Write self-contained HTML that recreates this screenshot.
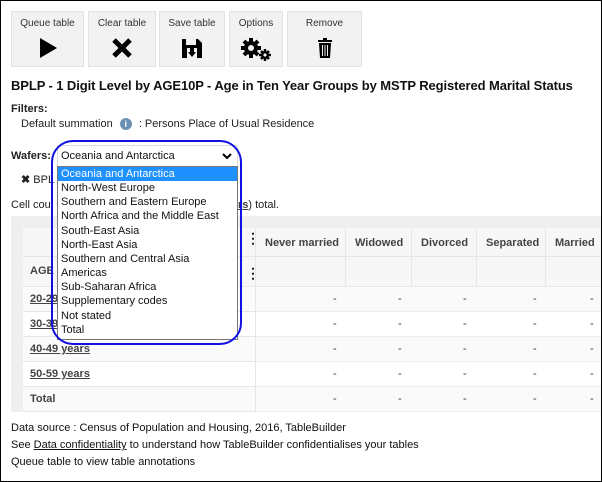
<!DOCTYPE html>
<html><head><meta charset="utf-8"><style>
*{box-sizing:border-box;margin:0;padding:0}
body{width:602px;height:482px;overflow:hidden;font-family:"Liberation Sans",Arial,sans-serif;font-size:11px;color:#222;background:#fff;position:relative}
.frame{position:absolute;left:0;top:0;width:602px;height:482px;border:1px solid #000;z-index:50;pointer-events:none}
.abs{position:absolute}
.btn{position:absolute;top:11px;height:56px;background:#f2f2f2;border:1px solid #e2e2e2;text-align:center;font-size:10px;color:#333;padding-top:6px}
.btn svg{display:block;margin:8px auto 0}
.t{position:absolute;white-space:nowrap}
.cell{position:absolute;border-right:1px solid #e6e6e6;border-bottom:1px solid #e6e6e6}
.dash{position:absolute;font-size:11px;color:#333}
.hdr{position:absolute;font-weight:bold;color:#444;font-size:11px}
.lk{text-decoration:underline;font-weight:bold;color:#444}
</style></head><body>
<div class="frame"></div>
<div class="btn" style="left:11px;width:73px">Queue table<svg width="20" height="22"><path d="M2 1L19 11L2 21Z" fill="#000"/></svg></div>
<div class="btn" style="left:88px;width:68px">Clear table<svg width="22" height="22"><path d="M3 3L19 19M19 3L3 19" stroke="#000" stroke-width="5"/></svg></div>
<div class="btn" style="left:159px;width:66px">Save table<svg width="22" height="22"><path d="M1 2H17L21 6V21H1Z" fill="#000"/><rect x="5" y="2" width="10" height="6" fill="#f2f2f2"/><rect x="6" y="11" width="10" height="10" fill="#f2f2f2"/><path d="M9 11V15H7L11 20L15 15H13V11Z" fill="#000"/></svg></div>
<div class="btn" style="left:229px;width:54px">Options<svg width="34" height="24"><g fill="#000"><circle cx="12" cy="11" r="7"/><g stroke="#000" stroke-width="4"><path d="M12 1V21M2 11H22M5 4L19 18M19 4L5 18"/></g><circle cx="12" cy="11" r="3" fill="#f2f2f2"/><circle cx="26" cy="18" r="4"/><g stroke="#000" stroke-width="2.5"><path d="M26 12V24M20 18H32M22 14L30 22M30 14L22 22"/></g><circle cx="26" cy="18" r="1.6" fill="#f2f2f2"/></g></svg></div>
<div class="btn" style="left:287px;width:75px">Remove<svg width="16" height="22"><rect x="1" y="3" width="14" height="2" fill="#000"/><rect x="6" y="1" width="4" height="2" fill="#000"/><path d="M2 6H14L13 21H3Z" fill="#000"/><path d="M5.5 8V19M8 8V19M10.5 8V19" stroke="#f2f2f2" stroke-width="1"/></svg></div>

<div class="t" style="left:11px;top:78px;font-size:13px;font-weight:bold;color:#111;letter-spacing:-0.1px">BPLP - 1 Digit Level by AGE10P - Age in Ten Year Groups by MSTP Registered Marital Status</div>
<div class="t" style="left:11px;top:103px;font-weight:bold">Filters:</div>
<div class="t" style="left:21px;top:118px">Default summation <span style="display:inline-block;width:12px;height:12px;border-radius:50%;background:#6b8fb5;color:#fff;font-size:9px;text-align:center;line-height:12px;font-weight:bold;margin:0 4px">i</span> : Persons Place of Usual Residence</div>
<div class="t" style="left:11px;top:150px;font-weight:bold">Wafers:</div>
<div class="t" style="left:21px;top:173px"><b>✖</b> BPL</div>
<div class="t" style="left:11px;top:199px">Cell cou</div>
<div class="t" style="left:238px;top:199px"><span class="lk">rs</span>) total.</div>

<div class="abs" style="left:11px;top:216px;width:591px;height:196px;background:#fff"></div>
<div class="abs" style="left:11px;top:216px;width:591px;height:12px;background:#efefef"></div>
<div class="abs" style="left:11px;top:216px;width:12px;height:196px;background:#efefef"></div>
<div class="abs" style="left:23px;top:228px;width:579px;height:59px;background:#f7f7f7"></div>
<div class="cell" style="left:23px;top:228px;width:233px;height:29px"></div>
<div class="cell" style="left:23px;top:257px;width:233px;height:30px"></div>
<div class="abs" style="left:246px;top:236px;font-weight:bold;font-size:14px;line-height:5px">⋮</div>
<div class="abs" style="left:246px;top:265px;font-weight:bold;font-size:14px">⋮</div>
<div class="t" style="left:30px;top:265px;font-weight:bold;color:#444">AGE</div>
<div class="cell" style="left:256px;top:228px;width:90px;height:29px"></div>
<div class="cell" style="left:346px;top:228px;width:66px;height:29px"></div>
<div class="cell" style="left:412px;top:228px;width:65px;height:29px"></div>
<div class="cell" style="left:477px;top:228px;width:69px;height:29px"></div>
<div class="cell" style="left:546px;top:228px;width:56px;height:29px"></div>
<div class="cell" style="left:256px;top:257px;width:90px;height:30px"></div>
<div class="cell" style="left:346px;top:257px;width:66px;height:30px"></div>
<div class="cell" style="left:412px;top:257px;width:65px;height:30px"></div>
<div class="cell" style="left:477px;top:257px;width:69px;height:30px"></div>
<div class="cell" style="left:546px;top:257px;width:56px;height:30px"></div>
<div class="hdr" style="left:265px;top:237px">Never married</div>
<div class="hdr" style="left:355px;top:237px">Widowed</div>
<div class="hdr" style="left:421px;top:237px">Divorced</div>
<div class="hdr" style="left:486px;top:237px">Separated</div>
<div class="hdr" style="left:555px;top:237px">Married</div>

<div class="cell" style="left:23px;top:287px;width:233px;height:25px;background:#fafafa"></div><div class="abs" style="left:256px;top:287px;width:346px;height:25px;background:#fafafa;border-bottom:1px solid #eee"></div>
<div class="cell" style="left:23px;top:312px;width:233px;height:25px"></div><div class="abs" style="left:256px;top:312px;width:346px;height:25px;border-bottom:1px solid #eee"></div>
<div class="cell" style="left:23px;top:337px;width:233px;height:25px;background:#fafafa"></div><div class="abs" style="left:256px;top:337px;width:346px;height:25px;background:#fafafa;border-bottom:1px solid #eee"></div>
<div class="cell" style="left:23px;top:362px;width:233px;height:25px"></div><div class="abs" style="left:256px;top:362px;width:346px;height:25px;border-bottom:1px solid #eee"></div>
<div class="cell" style="left:23px;top:387px;width:233px;height:25px;background:#fafafa"></div><div class="abs" style="left:256px;top:387px;width:346px;height:25px;background:#fafafa;border-bottom:1px solid #eee"></div>

<div class="t lk" style="left:30px;top:293px">20-29 years</div>
<div class="t lk" style="left:30px;top:318px">30-39 years</div>
<div class="t lk" style="left:30px;top:343px">40-49 years</div>
<div class="t lk" style="left:30px;top:368px">50-59 years</div>
<div class="t" style="left:30px;top:393px;font-weight:bold;color:#444">Total</div>

<div class="dash" style="left:333px;top:293px">-</div><div class="dash" style="left:398px;top:293px">-</div><div class="dash" style="left:463px;top:293px">-</div><div class="dash" style="left:533px;top:293px">-</div><div class="dash" style="left:590px;top:293px">-</div>
<div class="dash" style="left:333px;top:318px">-</div><div class="dash" style="left:398px;top:318px">-</div><div class="dash" style="left:463px;top:318px">-</div><div class="dash" style="left:533px;top:318px">-</div><div class="dash" style="left:590px;top:318px">-</div>
<div class="dash" style="left:333px;top:343px">-</div><div class="dash" style="left:398px;top:343px">-</div><div class="dash" style="left:463px;top:343px">-</div><div class="dash" style="left:533px;top:343px">-</div><div class="dash" style="left:590px;top:343px">-</div>
<div class="dash" style="left:333px;top:368px">-</div><div class="dash" style="left:398px;top:368px">-</div><div class="dash" style="left:463px;top:368px">-</div><div class="dash" style="left:533px;top:368px">-</div><div class="dash" style="left:590px;top:368px">-</div>
<div class="dash" style="left:333px;top:393px">-</div><div class="dash" style="left:398px;top:393px">-</div><div class="dash" style="left:463px;top:393px">-</div><div class="dash" style="left:533px;top:393px">-</div><div class="dash" style="left:590px;top:393px">-</div>

<div class="t" style="left:11px;top:422px;color:#111">Data source : Census of Population and Housing, 2016, TableBuilder</div>
<div class="t" style="left:11px;top:439px;color:#111">See <u>Data confidentiality</u> to understand how TableBuilder confidentialises your tables</div>
<div class="t" style="left:11px;top:456px;color:#111">Queue table to view table annotations</div>

<div class="abs" style="left:57px;top:145px;width:181px;height:22px;background:#fff;border:1px solid #ddd;z-index:10;padding:4px 3px;font-size:11px;color:#111">Oceania and Antarctica<svg style="position:absolute;right:5px;top:7px" width="10" height="7"><path d="M1 1L5 5L9 1" stroke="#000" stroke-width="2" fill="none"/></svg></div>
<div class="abs" style="left:57px;top:166px;width:181px;height:174px;background:#fff;border:1px solid #767676;z-index:10;font-size:11px;line-height:14.15px;color:#111">
<div style="background:#1e90ff;color:#fff;padding-left:3px">Oceania and Antarctica</div>
<div style="padding-left:3px">North-West Europe</div>
<div style="padding-left:3px">Southern and Eastern Europe</div>
<div style="padding-left:3px">North Africa and the Middle East</div>
<div style="padding-left:3px">South-East Asia</div>
<div style="padding-left:3px">North-East Asia</div>
<div style="padding-left:3px">Southern and Central Asia</div>
<div style="padding-left:3px">Americas</div>
<div style="padding-left:3px">Sub-Saharan Africa</div>
<div style="padding-left:3px">Supplementary codes</div>
<div style="padding-left:3px">Not stated</div>
<div style="padding-left:3px">Total</div>
</div>
<div class="abs" style="left:51px;top:140px;width:191px;height:205px;border:2px solid #1010e0;border-radius:22px;z-index:20"></div>
</body></html>
